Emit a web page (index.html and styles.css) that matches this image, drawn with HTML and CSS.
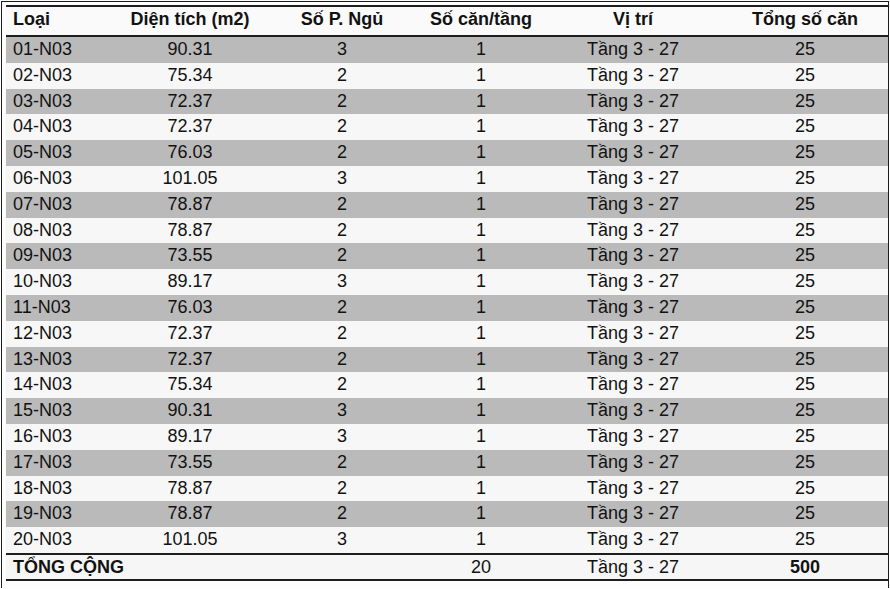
FILE: index.html
```html
<!DOCTYPE html>
<html lang="vi">
<head>
<meta charset="utf-8">
<title>Bảng căn hộ N03</title>
<link rel="stylesheet" href="styles.css">
</head>
<body>
<div class="frame">
  <div class="tbl">
    <div class="row head">
      <div class="c l">Loại</div><div class="c">Diện tích (m2)</div><div class="c">Số P. Ngủ</div><div class="c">Số căn/tầng</div><div class="c">Vị trí</div><div class="c last">Tổng số căn</div>
    </div>
    <div class="body">
      <div class="row g"><div class="c l">01-N03</div><div class="c">90.31</div><div class="c">3</div><div class="c">1</div><div class="c">Tầng 3 - 27</div><div class="c last">25</div></div>
      <div class="row w"><div class="c l">02-N03</div><div class="c">75.34</div><div class="c">2</div><div class="c">1</div><div class="c">Tầng 3 - 27</div><div class="c last">25</div></div>
      <div class="row g"><div class="c l">03-N03</div><div class="c">72.37</div><div class="c">2</div><div class="c">1</div><div class="c">Tầng 3 - 27</div><div class="c last">25</div></div>
      <div class="row w"><div class="c l">04-N03</div><div class="c">72.37</div><div class="c">2</div><div class="c">1</div><div class="c">Tầng 3 - 27</div><div class="c last">25</div></div>
      <div class="row g"><div class="c l">05-N03</div><div class="c">76.03</div><div class="c">2</div><div class="c">1</div><div class="c">Tầng 3 - 27</div><div class="c last">25</div></div>
      <div class="row w"><div class="c l">06-N03</div><div class="c">101.05</div><div class="c">3</div><div class="c">1</div><div class="c">Tầng 3 - 27</div><div class="c last">25</div></div>
      <div class="row g"><div class="c l">07-N03</div><div class="c">78.87</div><div class="c">2</div><div class="c">1</div><div class="c">Tầng 3 - 27</div><div class="c last">25</div></div>
      <div class="row w"><div class="c l">08-N03</div><div class="c">78.87</div><div class="c">2</div><div class="c">1</div><div class="c">Tầng 3 - 27</div><div class="c last">25</div></div>
      <div class="row g"><div class="c l">09-N03</div><div class="c">73.55</div><div class="c">2</div><div class="c">1</div><div class="c">Tầng 3 - 27</div><div class="c last">25</div></div>
      <div class="row w"><div class="c l">10-N03</div><div class="c">89.17</div><div class="c">3</div><div class="c">1</div><div class="c">Tầng 3 - 27</div><div class="c last">25</div></div>
      <div class="row g"><div class="c l">11-N03</div><div class="c">76.03</div><div class="c">2</div><div class="c">1</div><div class="c">Tầng 3 - 27</div><div class="c last">25</div></div>
      <div class="row w"><div class="c l">12-N03</div><div class="c">72.37</div><div class="c">2</div><div class="c">1</div><div class="c">Tầng 3 - 27</div><div class="c last">25</div></div>
      <div class="row g"><div class="c l">13-N03</div><div class="c">72.37</div><div class="c">2</div><div class="c">1</div><div class="c">Tầng 3 - 27</div><div class="c last">25</div></div>
      <div class="row w"><div class="c l">14-N03</div><div class="c">75.34</div><div class="c">2</div><div class="c">1</div><div class="c">Tầng 3 - 27</div><div class="c last">25</div></div>
      <div class="row g"><div class="c l">15-N03</div><div class="c">90.31</div><div class="c">3</div><div class="c">1</div><div class="c">Tầng 3 - 27</div><div class="c last">25</div></div>
      <div class="row w"><div class="c l">16-N03</div><div class="c">89.17</div><div class="c">3</div><div class="c">1</div><div class="c">Tầng 3 - 27</div><div class="c last">25</div></div>
      <div class="row g"><div class="c l">17-N03</div><div class="c">73.55</div><div class="c">2</div><div class="c">1</div><div class="c">Tầng 3 - 27</div><div class="c last">25</div></div>
      <div class="row w"><div class="c l">18-N03</div><div class="c">78.87</div><div class="c">2</div><div class="c">1</div><div class="c">Tầng 3 - 27</div><div class="c last">25</div></div>
      <div class="row g"><div class="c l">19-N03</div><div class="c">78.87</div><div class="c">2</div><div class="c">1</div><div class="c">Tầng 3 - 27</div><div class="c last">25</div></div>
      <div class="row w"><div class="c l">20-N03</div><div class="c">101.05</div><div class="c">3</div><div class="c">1</div><div class="c">Tầng 3 - 27</div><div class="c last">25</div></div>
    </div>
    <div class="row total">
      <div class="c l b">TỔNG CỘNG</div><div class="c"></div><div class="c"></div><div class="c">20</div><div class="c">Tầng 3 - 27</div><div class="c last b">500</div>
    </div>
  </div>
</div>
</body>
</html>
```

FILE: styles.css
```css
html, body {
  margin: 0;
  padding: 0;
  background: #ffffff;
}

body {
  font-family: "Liberation Sans", Arial, sans-serif;
  color: #121212;
  font-size: 18px;
}

.frame {
  margin: 1px 0 0 1px;
  width: 882px;
  height: 583px;
  padding: 3px 0 0 4px;
  border-top: 1px solid #1c1c1c;
  border-left: 1px solid #1c1c1c;
  border-right: 1px solid #1c1c1c;
  background: #fdfdfd;
}

.tbl {
  width: 882px;
  border-top: 2px solid #1e1e1e;
}

.row {
  display: grid;
  grid-template-columns: 114px 140px 164px 114px 190px 160px;
  align-items: center;
}

.c {
  text-align: center;
  white-space: nowrap;
}

.c.l {
  text-align: left;
  padding-left: 7px;
}

.c.last {
  padding-right: 6px;
}

.head {
  height: 28px;
  background: #fafafa;
  font-weight: bold;
  border-bottom: 2px solid #1e1e1e;
  align-items: start;
}

.head .c {
  line-height: 24px;
}

.body .row {
  height: 25.8px;
  line-height: 25.8px;
}

.row.g {
  background: #bababa;
}

.row.w {
  background: #f7f7f7;
}

.total {
  height: 24px;
  line-height: 24px;
  background: #f6f6f6;
  border-top: 2px solid #1e1e1e;
  border-bottom: 2px solid #1e1e1e;
}

.b {
  font-weight: bold;
}
```
